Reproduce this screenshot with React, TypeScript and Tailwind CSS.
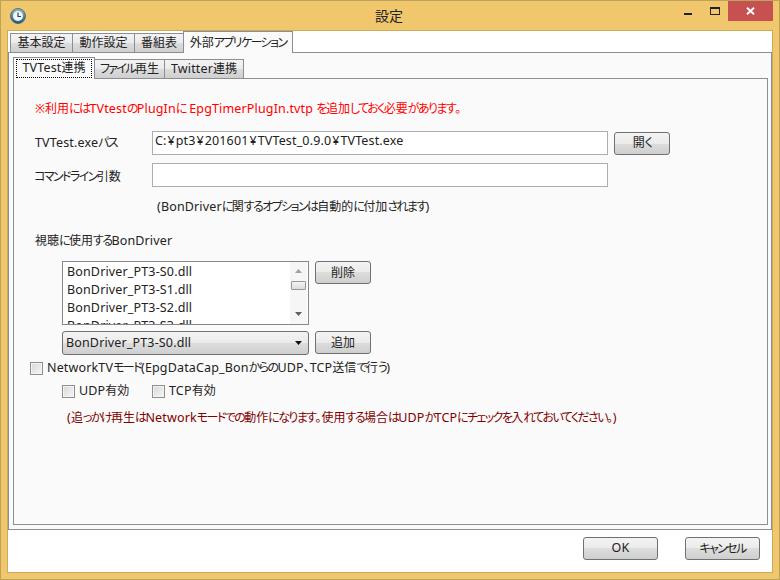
import React from "react";

const btnBg = "bg-[linear-gradient(#f3f3f3,#ebebeb_50%,#dddddd_50%,#cfcfcf)]";

function T({ children }: { children: string }) {
  const parts = children.match(/¥|[\x00-\x7F]+|[ぁ-ヿ]+|[^\x00-\x7F¥ぁ-ヿ]+/g) ?? [];
  return (
    <>
      {parts.map((p, i) => {
        if (p === "¥") return <span key={i} className="text-[12.5px] px-[1px]">{p}</span>;
        if (/^[\x00-\x7F]/.test(p)) return <span key={i} className="text-[12.5px] tracking-[0.15px]">{p}</span>;
        if (/^[ぁ-ヿ]/.test(p)) return <span key={i} className="tracking-[-1.6px]">{p}</span>;
        return <span key={i}>{p}</span>;
      })}
    </>
  );
}

function Btn({ label, w, h = "h-[23px]" }: { label: string; w: string; h?: string }) {
  return (
    <div className={`${w} ${h} shrink-0 flex items-center justify-center rounded-[3px] border border-[#707070] ${btnBg} text-[12px] text-[#222]`}>
      <span><T>{label}</T></span>
    </div>
  );
}

function Tab({ label, w, selected, focus, h }: { label: string; w: string; selected?: boolean; focus?: boolean; h: string }) {
  return (
    <div
      className={`${w} ${h} relative shrink-0 -ml-px first:ml-0 whitespace-nowrap flex items-center justify-center border border-[#8c8e94] text-[12px] text-[#222] ${
        selected ? "bg-[#fafafa] border-b-0 -mb-px z-10" : `${btnBg} border-b-0`
      }`}
    >
      {focus ? (
        <span className="w-[76px] h-[19px] flex items-center justify-center border border-dotted border-black"><span><T>{label}</T></span></span>
      ) : (
        <span><T>{label}</T></span>
      )}
    </div>
  );
}

function Check({ label, className = "" }: { label: string; className?: string }) {
  return (
    <div className={`flex items-center gap-[4px] whitespace-nowrap text-[12px] text-[#222] ${className}`}>
      <span className="w-[13px] h-[13px] shrink-0 border border-[#8e8f8f] bg-[linear-gradient(135deg,#d8d8d8,#f6f6f6)] shadow-[inset_0_0_0_1px_#f4f4f4]" />
      <span><T>{label}</T></span>
    </div>
  );
}

export default function App() {
  return (
    <div className="font-['Noto_Sans','Noto_Sans_CJK_JP',sans-serif] [font-feature-settings:'palt'] w-[780px] h-[580px] flex flex-col bg-[#f0c76c] border border-[#bda35a] overflow-hidden">
      {/* title bar */}
      <div className="h-[29px] shrink-0 flex items-start">
        <svg width="16" height="16" viewBox="0 0 16 16" className="ml-[9px] mt-[7px] shrink-0">
          <defs>
            <linearGradient id="c" x1="0" y1="0" x2="0" y2="1">
              <stop offset="0" stopColor="#8fb9cf" />
              <stop offset="1" stopColor="#1f5a80" />
            </linearGradient>
          </defs>
          <circle cx="8" cy="8" r="7.5" fill="url(#c)" stroke="#3c5f74" strokeWidth="0.8" />
          <circle cx="8" cy="8" r="5" fill="#f4f8fa" />
          <path d="M8 4.5V8.5H11" stroke="#26465c" strokeWidth="1.2" fill="none" />
        </svg>
        <div className="flex-1 text-center text-[14px] text-[#222] pt-[4px] pl-[68px]">設定</div>
        <div className="w-[16px] shrink-0 flex justify-start mt-[12px]">
          <span className="w-[8px] h-[2px] bg-[#222]" />
        </div>
        <div className="w-[18px] h-[9px] shrink-0 ml-[10px] mt-[6px]">
          <div className="w-[10px] h-[8px] border border-[#222] border-t-2" />
        </div>
        <div className="w-[45px] h-[20px] shrink-0 bg-[#c75050] flex items-center justify-center mr-[6px]">
          <svg width="9" height="8" viewBox="0 0 9 8">
            <path d="M1 0.8L8 7.2M8 0.8L1 7.2" stroke="#fff" strokeWidth="2" />
          </svg>
        </div>
      </div>

      {/* client */}
      <div className="w-[766px] h-[543px] ml-[6px] bg-white border border-[#c9ab5e] flex flex-col">
        <div className="h-[21px] flex items-end pl-[2px] shrink-0">
          <Tab label="基本設定" w="w-[63px]" h="h-[19px]" />
          <Tab label="動作設定" w="w-[63px]" h="h-[19px]" />
          <Tab label="番組表" w="w-[50px]" h="h-[19px]" />
          <Tab label="外部アプリケーション" w="w-[110px]" h="h-[22px]" selected />
        </div>
        <div className="w-[764px] h-[478px] border border-[#8c8e94] bg-[#fafafa] px-[4px] pt-[4px] flex flex-col shrink-0">
          <div className="h-[21px] flex items-end shrink-0">
            <Tab label="TVTest連携" w="w-[82px]" h="h-[22px]" selected focus />
            <Tab label="ファイル再生" w="w-[71px]" h="h-[19px]" />
            <Tab label="Twitter連携" w="w-[80px]" h="h-[19px]" />
          </div>
          <div className="w-[755px] h-[447px] border border-[#8c8e94] bg-[#fafafa] text-[12px] text-[#222] pl-[21px] pt-[21px] shrink-0 whitespace-nowrap">
            <div className="text-[#ff0000] h-[18px] leading-[18px]"><T>※利用にはTVtestのPlugInに EpgTimerPlugIn.tvtp を追加しておく必要があります。</T></div>

            <div className="flex items-center mt-[13px] h-[24px]">
              <div className="w-[117px] shrink-0"><T>TVTest.exeパス</T></div>
              <div className="w-[456px] h-[24px] shrink-0 border border-[#abadb3] bg-white pl-[2px] leading-[17px]"><T>C:¥pt3¥201601¥TVTest_0.9.0¥TVTest.exe</T></div>
              <div className="ml-[6px]"><Btn label="開く" w="w-[56px]" /></div>
            </div>
            <div className="flex items-center mt-[8px] h-[24px]">
              <div className="w-[118px] -ml-px pt-[3px] shrink-0"><T>コマンドライン引数</T></div>
              <div className="w-[456px] h-[24px] shrink-0 border border-[#abadb3] bg-white" />
            </div>
            <div className="ml-[122px] mt-[11px] h-[18px] leading-[18px]"><T>(BonDriverに関するオプションは自動的に付加されます)</T></div>
            <div className="mt-[16px] h-[18px] leading-[18px]"><T>視聴に使用するBonDriver</T></div>

            <div className="ml-[27px] mt-[11px] flex items-start">
              <div className="w-[247px] h-[64px] shrink-0 border border-[#828790] bg-white flex overflow-hidden">
                <div className="flex-1 pl-[4px] pt-[1px] overflow-hidden">
                  <div className="h-[18px] leading-[18px]"><T>BonDriver_PT3-S0.dll</T></div>
                  <div className="h-[18px] leading-[18px]"><T>BonDriver_PT3-S1.dll</T></div>
                  <div className="h-[18px] leading-[18px]"><T>BonDriver_PT3-S2.dll</T></div>
                  <div className="h-[18px] leading-[18px]"><T>BonDriver_PT3-S3.dll</T></div>
                </div>
                <div className="w-[17px] shrink-0 mr-[1px] bg-[#f6f6f6] flex flex-col items-center">
                  <svg width="7" height="4" viewBox="0 0 7 4" className="mt-[7px]"><path d="M3.5 0L7 4H0Z" fill="#a0a0a0" /></svg>
                  <div className="w-[15px] h-[9px] mt-[8px] rounded-[1px] border border-[#979797] bg-[linear-gradient(#f4f4f4,#dcdcdc)]" />
                  <svg width="7" height="4" viewBox="0 0 7 4" className="mt-[22px]"><path d="M0 0H7L3.5 4Z" fill="#606060" /></svg>
                </div>
              </div>
              <div className="ml-[6px]"><Btn label="削除" w="w-[56px]" /></div>
            </div>

            <div className="ml-[27px] mt-[6px] flex items-start">
              <div className={`w-[247px] h-[24px] shrink-0 rounded-[3px] border border-[#707070] ${btnBg} flex items-center pl-[3px] pr-[4px]`}>
                <span className="flex-1"><T>BonDriver_PT3-S0.dll</T></span>
                <svg width="7" height="4" viewBox="0 0 7 4" className="mr-[2px]"><path d="M0 0H7L3.5 4Z" fill="#111" /></svg>
              </div>
              <div className="ml-[6px]"><Btn label="追加" w="w-[56px]" /></div>
            </div>

            <Check className="-ml-[5px] mt-[5px] h-[17px]" label="NetworkTVモード(EpgDataCap_BonからのUDP、TCP送信で行う)" />
            <div className="flex ml-[27px] mt-[6px] h-[17px]">
              <Check className="w-[90px]" label="UDP有効" />
              <Check label="TCP有効" />
            </div>
            <div className="ml-[32px] mt-[9px] h-[18px] leading-[18px] text-[#800000]"><T>(追っかけ再生はNetworkモードでの動作になります。使用する場合はUDPかTCPにチェックを入れておいてください。)</T></div>
          </div>
        </div>
        <div className="flex justify-end mt-[7px] pr-[12px]">
          <Btn label="OK" w="w-[75px]" />
          <div className="ml-[27px]"><Btn label="キャンセル" w="w-[75px]" /></div>
        </div>
      </div>
    </div>
  );
}
